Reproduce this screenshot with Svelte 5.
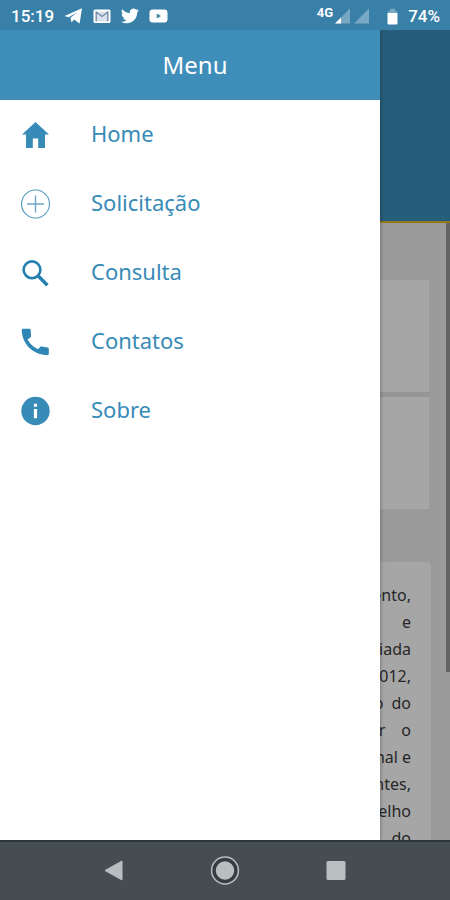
<script>
  const items = [
    { label: 'Home', icon: 'home' },
    { label: 'Solicitação', icon: 'add' },
    { label: 'Consulta', icon: 'search' },
    { label: 'Contatos', icon: 'phone' },
    { label: 'Sobre', icon: 'info' },
  ];

  // gap is the space between the justified words of a line
  const lines = [
    { words: ['ento,'], gap: 4 },
    { words: ['e'], gap: 4 },
    { words: ['iada'], gap: 4 },
    { words: ['2012,'], gap: 4 },
    { words: ['o', 'do'], gap: 8 },
    { words: ['r', 'o'], gap: 16 },
    { words: ['nal', 'e'], gap: 4 },
    { words: ['ntes,'], gap: 4 },
    { words: ['elho'], gap: 4 },
    { words: ['do'], gap: 4 },
  ];
</script>

<div class="phone">
  <header class="status">
    <span class="time">15:19</span>
    <svg width="19" height="18" viewBox="0 0 19 18" aria-hidden="true">
      <path d="M.5 9 18 1.2 15.6 16.4 10 12.6 7.6 15.4 6.4 10.8 13.4 5.2 4.6 10.2Z" fill="#fff" />
    </svg>
    <svg width="18" height="18" viewBox="0 0 18 18" aria-hidden="true">
      <rect x="0.5" y="2.5" width="17" height="13.5" rx="1.6" fill="#fff" />
      <path d="M3.2 4.6H14.8V14.2H3.2Z" fill="#dcdfee" />
      <path d="M3.2 14.2V5L9 9.4 14.8 5V14.2" fill="none" stroke="#6d86a6" stroke-width="1.3" />
    </svg>
    <svg width="18" height="18" viewBox="0 0 24 24" aria-hidden="true">
      <path fill="#fff" d="M23.95 4.57a10 10 0 0 1-2.82.77 4.96 4.96 0 0 0 2.16-2.72c-.95.55-2 .96-3.13 1.18a4.92 4.92 0 0 0-8.38 4.48A13.93 13.93 0 0 1 1.64 3.16a4.92 4.92 0 0 0 1.52 6.57 4.9 4.9 0 0 1-2.23-.61v.06a4.92 4.92 0 0 0 3.95 4.83 5 5 0 0 1-2.21.08 4.94 4.94 0 0 0 4.6 3.42A9.87 9.87 0 0 1 0 19.54a13.99 13.99 0 0 0 7.55 2.21c9.05 0 14-7.5 14-13.98 0-.21 0-.42-.02-.63a9.94 9.94 0 0 0 2.42-2.57Z" />
    </svg>
    <svg width="19" height="18" viewBox="0 0 19 18" aria-hidden="true">
      <rect x="0.5" y="2.5" width="18" height="13" rx="3.2" fill="#fff" />
      <path d="M7.8 6.6 12 9 7.8 11.4Z" fill="#3880a8" />
    </svg>
    <span class="net">4G</span>
    <svg width="15" height="16" viewBox="0 0 15 16" aria-hidden="true">
      <path d="M0 15.5 15 .5V15.5Z" fill="#79a8c4" />
      <path d="M0 15.5 6 9.5V15.5Z" fill="#fff" />
    </svg>
    <svg class="signal" width="15" height="16" viewBox="0 0 15 16" aria-hidden="true">
      <path d="M0 15.5 15 .5V15.5Z" fill="#79a8c4" />
    </svg>
    <svg class="battery" width="11" height="17" viewBox="0 0 11 17" aria-hidden="true">
      <path d="M.5 5V4L3 2.4V.8H8V2.4L10.5 4V5Z" fill="#79a8c4" />
      <path d="M.5 5H10.5V15.5Q10.5 16.5 9.5 16.5H1.5Q.5 16.5 .5 15.5Z" fill="#fff" />
    </svg>
    <span class="percent">74%</span>
  </header>

  <main class="screen">
    <section class="page">
      <div class="banner"></div>
      <div class="content">
        <div class="tiles">
          <div class="tile"></div>
          <div class="tile"></div>
        </div>
        <div class="article">
          {#each lines as line}
            <div class="line" style="gap: {line.gap}px">
              {#each line.words as word}<span>{word}</span>{/each}
            </div>
          {/each}
        </div>
        <div class="scrollbar"></div>
      </div>
    </section>

    <aside class="drawer">
      <h1>Menu</h1>
      <nav>
        {#each items as item}
          <a href="#{item.icon}">
            <svg width="30" height="30" viewBox="0 0 30 30" aria-hidden="true">
              {#if item.icon === 'home'}
                <path fill="#378bb7" d="M15.5 2 29 14.4H25V28H18.2V18.6H12.8V28H6V14.4H2Z" />
              {:else if item.icon === 'add'}
                <circle cx="15.5" cy="15" r="14" fill="none" stroke="#5a9cc2" stroke-width="1.2" />
                <path d="M15.5 6.5V23.5M7 15H24" fill="none" stroke="#6fa6c9" stroke-width="1.4" />
              {:else if item.icon === 'search'}
                <circle cx="12" cy="11.8" r="8.4" fill="none" stroke="#2580b0" stroke-width="2.6" />
                <path d="M18 17.8 27.4 27.2" fill="none" stroke="#2580b0" stroke-width="3.4" />
              {:else if item.icon === 'phone'}
                <path fill="#2f86b4" d="M3 1.8H9.4Q10.6 1.8 10.7 3.2L11 9.2Q11 10 10.3 10.5L7.6 12.6Q11 19.2 18 22.2L20.4 19.8Q21 19.2 22 19.4L27.6 20.4Q28.8 20.7 28.8 21.8V26.8Q28.8 28 27.5 28C13.5 28 2 17.5 1.8 3Q1.8 1.8 3 1.8Z" />
              {:else}
                <circle cx="15.5" cy="15" r="14.2" fill="#378bb7" />
                <path d="M13.9 7.8H17.1V10.8H13.9ZM13.9 13H17.1V22.2H13.9Z" fill="#fff" />
              {/if}
            </svg>
            <span>{item.label}</span>
          </a>
        {/each}
      </nav>
    </aside>
  </main>

  <footer class="keys">
    <button aria-label="Voltar">
      <svg width="30" height="30" viewBox="0 0 30 30"><path d="M6 14.5 23 5V24Z" fill="#b9bfc0" stroke="#b9bfc0" stroke-linejoin="round" /></svg>
    </button>
    <button aria-label="Início">
      <svg width="30" height="30" viewBox="0 0 30 30">
        <circle cx="15" cy="14.5" r="13.4" fill="#343e42" stroke="#b9bfc0" stroke-width="1.5" />
        <circle cx="15" cy="14.5" r="9.2" fill="#b9bfc0" />
      </svg>
    </button>
    <button aria-label="Recentes">
      <svg width="30" height="30" viewBox="0 0 30 30"><rect x="5.5" y="5" width="19" height="19" rx="1.5" fill="#b9bfc0" /></svg>
    </button>
  </footer>
</div>

<style>
  :global(body) {
    margin: 0;
  }
  .phone {
    display: flex;
    flex-direction: column;
    height: 100vh;
    overflow: hidden;
    font-family: 'Noto Sans', sans-serif;
  }
  .status {
    display: flex;
    align-items: center;
    box-sizing: border-box;
    height: 30px;
    padding: 2px 10px 0 11px;
    gap: 10px;
    background: #3880a8;
    color: #fff;
    font: 500 17px/28px Roboto, sans-serif;
  }
  .status svg {
    flex: none;
  }
  .net {
    margin-left: auto;
    margin-right: -8px;
    padding-bottom: 6px;
    font-size: 13px;
    line-height: 20px;
    font-weight: 700;
  }
  .signal {
    margin-left: -6px;
  }
  .battery {
    margin-left: 8px;
  }
  .screen {
    position: relative;
    flex: 1;
    min-height: 0;
    overflow: hidden;
  }
  .page {
    display: flex;
    flex-direction: column;
    height: 100%;
    overflow: hidden;
    background: #9a9a9a;
  }
  .banner {
    flex: none;
    height: 191px;
    border-bottom: 2px solid #94761a;
    background: #265d7a;
  }
  .content {
    position: relative;
    flex: 1;
    min-height: 0;
    padding: 57px 19px 0;
  }
  .tiles {
    display: grid;
    gap: 5px;
    margin: 0 2px 53px;
    background: #959595;
  }
  .tile {
    height: 112px;
    background: #a6a6a6;
  }
  .article {
    padding: 20px 20px 0;
    border-radius: 4px;
    background: #a6a6a6;
    color: #262626;
    font-size: 16px;
    line-height: 27px;
  }
  .line {
    display: flex;
    justify-content: flex-end;
  }
  .scrollbar {
    position: absolute;
    top: 0;
    right: 0;
    width: 4px;
    height: 449px;
    background: #636363;
  }
  .drawer {
    position: absolute;
    inset: 0 auto 0 0;
    width: calc(100% - 70px);
    background: #fff;
    box-shadow: 0 0 4px rgba(0, 0, 0, 0.4);
  }
  h1 {
    margin: 0;
    padding-left: 10px;
    background: #3f8eb9;
    color: #fff;
    font-size: 24px;
    font-weight: 400;
    line-height: 70px;
    text-align: center;
  }
  nav a {
    display: flex;
    align-items: center;
    gap: 41px;
    height: 69px;
    padding-left: 20px;
    color: #378bb7;
    font-size: 22px;
    line-height: 30px;
    text-decoration: none;
  }
  nav span {
    padding-bottom: 4px;
  }
  .keys {
    display: flex;
    justify-content: center;
    gap: 81px;
    box-sizing: border-box;
    height: 60px;
    border-top: 2px solid #2c373b;
    background: #454d52;
  }
  .keys button {
    display: flex;
    align-items: center;
    padding: 0;
    border: 0;
    background: none;
  }
</style>
